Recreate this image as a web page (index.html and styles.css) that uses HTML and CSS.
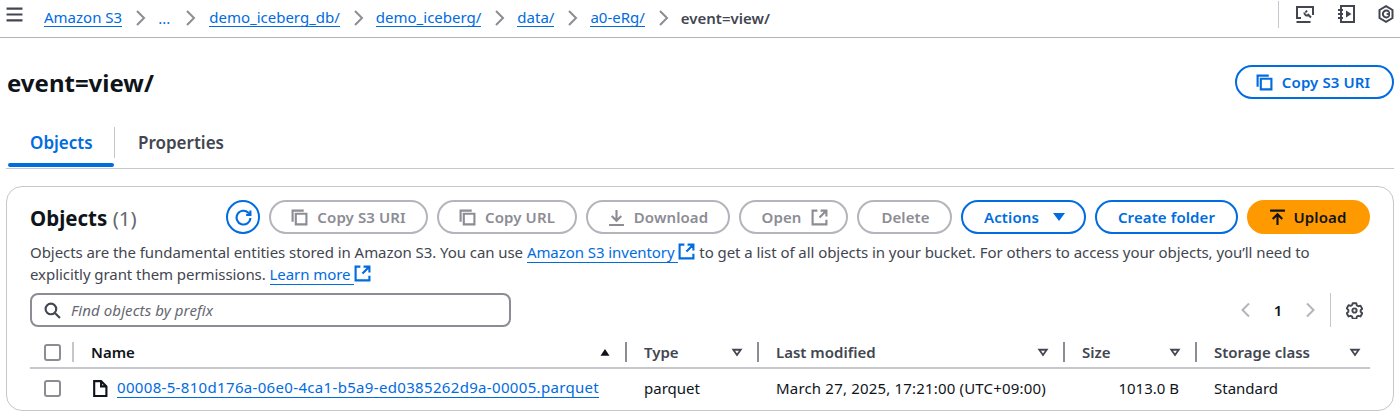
FILE: index.html
```html
<!DOCTYPE html>
<html lang="en">
<head>
    <meta charset="UTF-8">
    <title>event=view/ - S3 bucket</title>
    <link rel="stylesheet" href="styles.css">
</head>
<body>
    <header class="topbar">
        <svg class="icon menu-icon" viewBox="0 0 16 16"><path d="M0.500 2.500h15M0.500 8h15M0.500 13.500h15"/></svg>
        <nav class="crumbs">
            <a href="#">Amazon S3</a>
            <svg class="chev" viewBox="0 0 16 16"><path d="M4 1l7 7-7 7"/></svg>
            <a class="dots" href="#">...</a>
            <svg class="chev chev-wide" viewBox="0 0 16 16"><path d="M4 1l7 7-7 7"/></svg>
            <a href="#">demo_iceberg_db/</a>
            <svg class="chev" viewBox="0 0 16 16"><path d="M4 1l7 7-7 7"/></svg>
            <a href="#">demo_iceberg/</a>
            <svg class="chev" viewBox="0 0 16 16"><path d="M4 1l7 7-7 7"/></svg>
            <a href="#">data/</a>
            <svg class="chev" viewBox="0 0 16 16"><path d="M4 1l7 7-7 7"/></svg>
            <a href="#">a0-eRg/</a>
            <svg class="chev" viewBox="0 0 16 16"><path d="M4 1l7 7-7 7"/></svg>
            <span class="crumb-current">event=view/</span>
        </nav>
        <div class="tools">
            <svg class="icon tool-icon" viewBox="0 0 18 18"><path d="M5 13H1V2h16v8M0.500 17h14M8.500 7.500a2.500 2.500 0 0 0 4 2.500M11 5.500l-1.500 2M11.500 9l3.500 3.500"/></svg>
            <svg class="icon tool-icon" viewBox="0 0 18 18"><path d="M4 1h13v16H4zM1 5h5M1 9h5M1 13h5"/><path class="fill" d="M9 5.500l5.500 3.500L9 12.500z"/></svg>
            <svg class="icon tool-icon tool-last" viewBox="0 0 16 18"><path d="M8 1.200l6.500 3.800v8L8 16.800 1.500 13V5z"/><path d="M11 7a3.400 3.400 0 1 0 0 4"/><path class="fill" d="M8 9l4-2.500v5z"/></svg>
        </div>
    </header>

    <section class="page-head">
        <h1>event=view/</h1>
        <button class="btn btn-normal btn-head">
            <svg class="icon" viewBox="0 0 16 16"><path d="M1.500 12V1.500H12M4.500 4.500h10v10h-10z"/></svg>
            Copy S3 URI
        </button>
    </section>

    <div class="tabs">
        <a class="tab tab-active" href="#">Objects</a>
        <span class="tab-sep"></span>
        <a class="tab" href="#">Properties</a>
    </div>

    <section class="card">
        <div class="card-head">
            <h2>Objects <span class="count">(1)</span></h2>
            <div class="actions">
                <button class="btn btn-normal btn-round">
                    <svg class="icon" viewBox="0 0 16 16"><path d="M10.500 5.500h4v-4"/><path d="M14.500 8.500a6.500 6.500 0 1 1-1.900-5L14.500 5.500"/></svg>
                </button>
                <button class="btn btn-off w-copyuri">
                    <svg class="icon" viewBox="0 0 16 16"><path d="M1.500 12V1.500H12M4.500 4.500h10v10h-10z"/></svg>
                    Copy S3 URI
                </button>
                <button class="btn btn-off w-copyurl">
                    <svg class="icon" viewBox="0 0 16 16"><path d="M1.500 12V1.500H12M4.500 4.500h10v10h-10z"/></svg>
                    Copy URL
                </button>
                <button class="btn btn-off w-download">
                    <svg class="icon" viewBox="0 0 16 16"><path d="M8 1v10M3.500 6.500L8 11l4.500-4.500M1 15h14"/></svg>
                    Download
                </button>
                <button class="btn btn-off w-open">
                    Open
                    <svg class="icon" viewBox="0 0 16 16"><path d="M6 1.500H1.500v13h13V10M9 1.500h5.500V7M14.500 1.500L8 8"/></svg>
                </button>
                <button class="btn btn-off w-delete">Delete</button>
                <button class="btn btn-normal w-actions">
                    Actions
                    <svg class="caret" viewBox="0 0 16 16"><path d="M2 4h12l-6 8z"/></svg>
                </button>
                <button class="btn btn-normal w-create">Create folder</button>
                <button class="btn btn-primary w-upload">
                    <svg class="icon" viewBox="0 0 16 16"><path d="M1 1.500h14M8 15V5M3.500 9.500L8 5l4.500 4.500"/></svg>
                    Upload
                </button>
            </div>
        </div>

        <p class="desc">Objects are the fundamental entities stored in Amazon S3. You can use <a href="#">Amazon S3 inventory </a><svg class="icon ext" viewBox="0 0 16 16"><path d="M6 1.500H1.500v13h13V10M9 1.500h5.500V7M14.500 1.500L8 8"/></svg> to get a list of all objects in your bucket. For others to access your objects, you’ll need to explicitly grant them permissions. <a href="#">Learn more </a><svg class="icon ext" viewBox="0 0 16 16"><path d="M6 1.500H1.500v13h13V10M9 1.500h5.500V7M14.500 1.500L8 8"/></svg></p>

        <div class="filter-row">
            <div class="search">
                <svg class="icon" viewBox="0 0 16 16"><circle cx="6.500" cy="6.500" r="5"/><path d="M10.500 10.500L15 15"/></svg>
                <span>Find objects by prefix</span>
            </div>
            <div class="pager">
                <svg class="pager-chev" viewBox="0 0 16 16"><path d="M11 1.500L4.500 8l6.500 6.500"/></svg>
                <span class="page-no">1</span>
                <svg class="pager-chev" viewBox="0 0 16 16"><path d="M5 1.500L11.500 8 5 14.500"/></svg>
                <span class="pager-sep"></span>
                <svg class="icon gear" viewBox="0 0 16 16"><path d="M6.300 1.200h3.400l.5 2 1.400.8 2-.6 1.700 3-1.500 1.400v1.400l1.500 1.400-1.700 3-2-.6-1.400.8-.5 2H6.300l-.5-2-1.400-.8-2 .6-1.700-3 1.500-1.400V7.400L.7 6l1.700-3 2 .6 1.400-.8z" stroke-linejoin="round"/><circle cx="8" cy="8" r="2"/></svg>
            </div>
        </div>

        <div class="table">
            <div class="th th-select"><span class="check"></span><i class="th-sep th-sep-light"></i></div>
            <div class="th th-name"><span class="th-label">Name</span><svg class="sort" viewBox="0 0 16 16"><path class="fill" d="M2 13L8 4l6 9z"/></svg><i class="th-sep"></i></div>
            <div class="th"><span class="th-label">Type</span><svg class="sort" viewBox="0 0 16 16"><path d="M3 5h10l-5 7z"/></svg><i class="th-sep"></i></div>
            <div class="th"><span class="th-label">Last modified</span><svg class="sort" viewBox="0 0 16 16"><path d="M3 5h10l-5 7z"/></svg><i class="th-sep"></i></div>
            <div class="th"><span class="th-label">Size</span><svg class="sort" viewBox="0 0 16 16"><path d="M3 5h10l-5 7z"/></svg><i class="th-sep"></i></div>
            <div class="th th-last"><span class="th-label">Storage class</span><svg class="sort" viewBox="0 0 16 16"><path d="M3 5h10l-5 7z"/></svg></div>

            <div class="td td-select"><span class="check"></span></div>
            <div class="td td-name">
                <svg class="icon file" viewBox="0 0 16 16"><path d="M3 1h6.500L14.500 6v9H3zM9.500 1v5h5"/></svg>
                <a href="#">00008-5-810d176a-06e0-4ca1-b5a9-ed0385262d9a-00005.parquet</a>
            </div>
            <div class="td">parquet</div>
            <div class="td td-date">March 27, 2025, 17:21:00 (UTC+09:00)</div>
            <div class="td td-size">1013.0 B</div>
            <div class="td">Standard</div>
        </div>
    </section>
</body>
</html>
```

FILE: styles.css
```css
body {
    margin: 0;
    padding: 0;
    font-family: 'Noto Sans', sans-serif;
    font-size: 15px;
    line-height: 20px;
    color: #424650;
    background-color: #ffffff;
    overflow: hidden;
}
a {
    color: #006ce0;
    text-decoration: none;
    border-bottom: 1px solid #006ce0;
}
.icon {
    width: 17px;
    height: 17px;
    fill: none;
    stroke: currentColor;
    stroke-width: 2;
    flex: none;
}
.fill {
    fill: currentColor;
    stroke: none;
}

/* top bar */
.topbar {
    display: flex;
    align-items: flex-start;
    height: 37px;
    padding-left: 6px;
    border-bottom: 1px solid #b4b4bb;
}
.menu-icon {
    margin-top: 6px;
    color: #424650;
}
.crumbs {
    display: flex;
    align-items: center;
    margin-left: 21px;
    margin-top: 8px;
}
.crumbs a {
    line-height: 17px;
}
.chev {
    width: 16px;
    height: 16px;
    margin: 0 9px 0 11px;
    fill: none;
    stroke: #8c8c94;
    stroke-width: 2;
}
.chev-wide {
    margin-right: 10px;
}
.crumbs a.dots {
    border-bottom: none;
    margin-right: 2px;
}
.crumb-current {
    font-weight: 600;
    color: #424650;
}
.tools {
    display: flex;
    align-items: center;
    margin-left: auto;
    margin-top: 1px;
    height: 27px;
    padding-left: 17px;
    border-left: 1px solid #c6c6cd;
    color: #424650;
}
.tool-icon {
    width: 18px;
    height: 18px;
    margin-right: 23px;
    margin-bottom: 2px;
}
.tool-last {
    width: 16px;
    margin-right: 6px;
}

/* page header */
.page-head {
    display: flex;
    align-items: center;
    justify-content: space-between;
    height: 34px;
    margin-top: 27px;
    padding: 0 6px 0 7px;
}
h1 {
    margin: 0;
    padding-top: 2px;
    font-size: 24px;
    line-height: 30px;
    font-weight: 700;
    color: #0f141a;
}

/* buttons */
.btn {
    display: inline-flex;
    align-items: center;
    justify-content: center;
    gap: 8px;
    height: 34px;
    padding: 0;
    box-sizing: border-box;
    border: 2px solid #006ce0;
    border-radius: 20px;
    background-color: #ffffff;
    color: #006ce0;
    font-family: inherit;
    font-size: 15px;
    font-weight: 600;
    letter-spacing: 0.1px;
    flex: none;
}
.btn-head {
    width: 159px;
    padding-right: 3px;
    gap: 9px;
}
.btn-round {
    width: 34px;
}
.btn-off {
    border-color: #b4b4bb;
    color: #8c8c94;
}
.btn-primary {
    border-color: #ff9900;
    background-color: #ff9900;
    color: #0f141a;
}
.w-copyuri { width: 159px; gap: 9px; }
.w-copyurl { width: 140px; gap: 9px; }
.w-download { width: 144px; gap: 9px; }
.w-open { width: 109px; gap: 10px; padding-left: 3px; }
.w-delete { width: 95px; padding-left: 2px; }
.w-actions { width: 125px; gap: 12px; padding-left: 4px; }
.w-create { width: 143px; }
.w-upload { width: 123px; gap: 8px; padding-right: 2px; }
.caret {
    width: 16px;
    height: 16px;
    fill: currentColor;
}

/* tabs */
.tabs {
    display: flex;
    align-items: flex-start;
    height: 41px;
    margin: 28px 6px 0;
    border-bottom: 1px solid #c6c6cd;
}
.tab {
    margin-top: 6px;
    padding: 0 23px;
    border: none;
    font-size: 17px;
    font-weight: 600;
    color: #424650;
}
.tab-active {
    width: 62px;
    padding: 0 22px 0 24px;
    color: #006ce0;
    position: relative;
}
.tab-active::after {
    content: "";
    position: absolute;
    left: 2px;
    right: 0;
    top: 30px;
    height: 4px;
    border-radius: 2px;
    background-color: #006ce0;
}
.tab-sep {
    width: 1px;
    height: 31px;
    background-color: #c6c6cd;
}

/* card */
.card {
    box-sizing: border-box;
    height: 225px;
    margin: 17px 6px 0;
    padding: 13px 23px 0;
    border: 1px solid #c6c6cd;
    border-radius: 16px;
}
.card-head {
    display: flex;
    align-items: center;
    justify-content: space-between;
    height: 34px;
}
h2 {
    margin: 0;
    padding-top: 2px;
    font-size: 20.5px;
    line-height: 24px;
    font-weight: 700;
    color: #0f141a;
}
.count {
    font-weight: 400;
    color: #656871;
}
.actions {
    display: flex;
    align-items: center;
    gap: 9px;
}
.desc {
    margin: 7px 0 0;
    line-height: 22px;
    letter-spacing: -0.06px;
}
.ext {
    color: #006ce0;
    vertical-align: -2px;
}
.filter-row {
    display: flex;
    align-items: center;
    justify-content: space-between;
    height: 34px;
    margin-top: 8px;
}
.search {
    display: flex;
    align-items: center;
    gap: 10px;
    box-sizing: border-box;
    width: 481px;
    height: 34px;
    padding-left: 12px;
    border: 2px solid #8c8c94;
    border-radius: 8px;
    color: #656871;
    font-style: italic;
    letter-spacing: 0.1px;
}
.search .icon {
    color: #424650;
}
.pager {
    display: flex;
    align-items: center;
    height: 34px;
    padding-right: 7px;
    color: #0f141a;
}
.pager-chev {
    width: 16px;
    height: 16px;
    fill: none;
    stroke: #b4b4bb;
    stroke-width: 2;
}
.page-no {
    width: 48px;
    text-align: center;
    font-weight: 600;
}
.pager-sep {
    width: 1px;
    height: 34px;
    margin: 0 15px 0 12px;
    background-color: #c6c6cd;
}
.gear {
    color: #424650;
    stroke-width: 1.8;
}

/* table */
.table {
    display: grid;
    grid-template-columns: 61px 553px 132px 306px 132px 156px;
    margin-top: 10px;
}
.th {
    display: flex;
    align-items: center;
    height: 30px;
    border-bottom: 2px solid #c6c6cd;
    font-weight: 600;
    color: #424650;
}
.th-name .th-label {
    color: #0f141a;
}
.th-label {
    flex: 1;
}
.sort {
    width: 12px;
    height: 12px;
    flex: none;
    fill: none;
    stroke: #424650;
    stroke-width: 2.4;
}
.th-name .sort {
    stroke: none;
    color: #0f141a;
}
.th-sep {
    width: 2px;
    height: 20px;
    margin-left: 14px;
    margin-right: 17px;
    background-color: #8c8c94;
}
.th-last .sort {
    margin-right: 9px;
}
.th-select {
    padding-left: 14px;
}
.th-sep-light {
    margin-left: 11px;
    margin-right: 0;
    background-color: #c6c6cd;
}
.check {
    display: block;
    box-sizing: border-box;
    width: 17px;
    height: 17px;
    border: 2px solid #8c8c94;
    border-radius: 3px;
    background-color: #ffffff;
}
.td {
    display: flex;
    align-items: center;
    height: 38px;
    color: #0f141a;
}
.td-select {
    padding-left: 14px;
}
.td-name {
    gap: 9px;
}
.td-name a {
    line-height: 19px;
    letter-spacing: 0.33px;
}
.td-date {
    letter-spacing: 0.18px;
}
.file {
    color: #0f141a;
}
.td-size {
    justify-content: flex-end;
    padding-right: 35px;
}
```
